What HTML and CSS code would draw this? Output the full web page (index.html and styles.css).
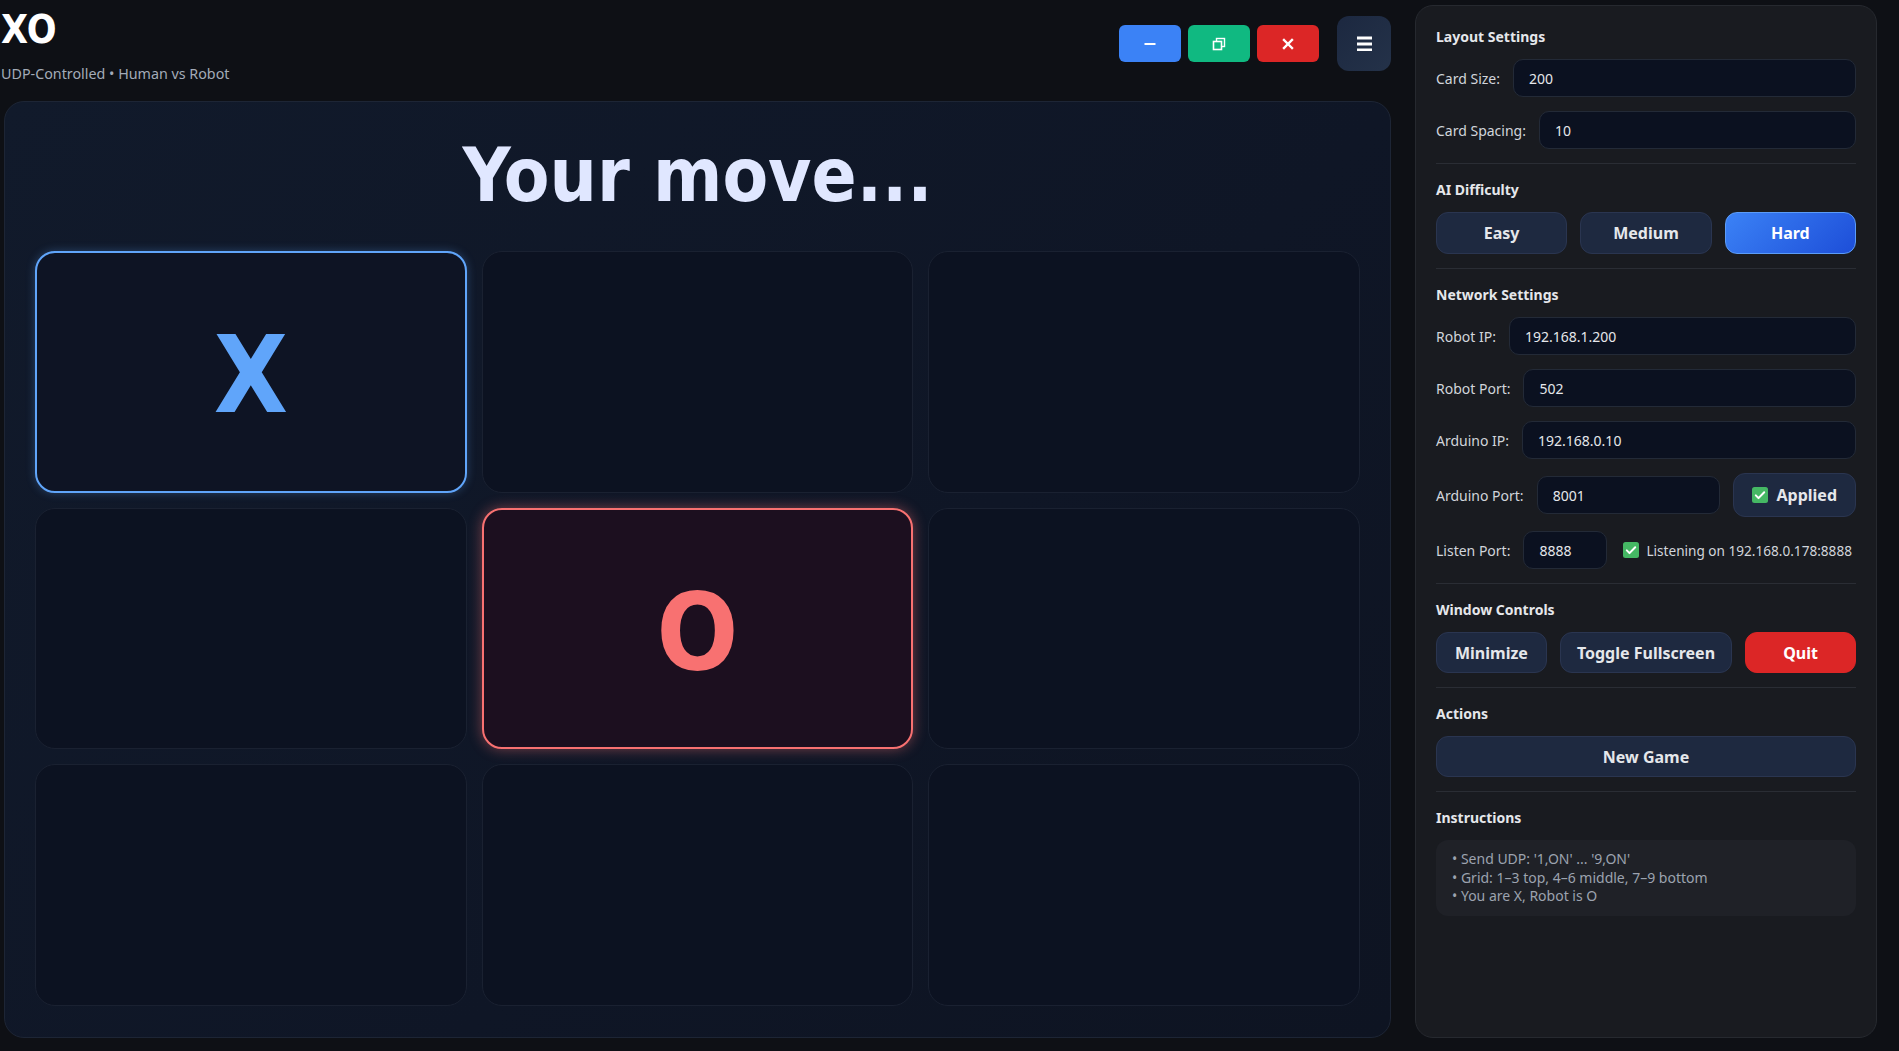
FILE: index.html
```html
<!DOCTYPE html>
<html lang="en">
<head>
<meta charset="utf-8">
<title>XO</title>
<link rel="stylesheet" href="styles.css">
</head>
<body>
<div class="app">
  <main class="main">
    <header class="header">
      <div class="brand">
        <h1 class="title">XO</h1>
        <p class="subtitle">UDP-Controlled • Human vs Robot</p>
      </div>
      <div class="controls">
        <div class="win-btns">
          <button class="wbtn wbtn-min" aria-label="Minimize">
            <svg width="12" height="12" viewBox="0 0 12 12"><rect x="0.5" y="5" width="11" height="2" fill="#fff"/></svg>
          </button>
          <button class="wbtn wbtn-max" aria-label="Toggle fullscreen">
            <svg width="14" height="14" viewBox="0 0 14 14"><rect x="4.5" y="1.5" width="8" height="8" fill="none" stroke="#fff" stroke-width="1.4"/><rect x="1.5" y="4.5" width="8" height="8" fill="#10b981" stroke="#fff" stroke-width="1.6"/></svg>
          </button>
          <button class="wbtn wbtn-close" aria-label="Close">
            <svg width="12" height="12" viewBox="0 0 12 12"><path d="M2 2L10 10M10 2L2 10" stroke="#fff" stroke-width="2.4" stroke-linecap="square"/></svg>
          </button>
        </div>
        <button class="menu-btn" aria-label="Menu">
          <svg width="15" height="15" viewBox="0 0 15 15"><rect x="0" y="0.5" width="15" height="3" fill="#fff"/><rect x="0" y="6.5" width="15" height="3" fill="#fff"/><rect x="0" y="12.5" width="15" height="3" fill="#fff"/></svg>
        </button>
      </div>
    </header>

    <section class="board-panel">
      <h2 class="status">Your move...</h2>
      <div class="grid">
        <div class="cell cell-x"><span class="mark">X</span></div>
        <div class="cell"></div>
        <div class="cell"></div>
        <div class="cell"></div>
        <div class="cell cell-o"><span class="mark">O</span></div>
        <div class="cell"></div>
        <div class="cell"></div>
        <div class="cell"></div>
        <div class="cell"></div>
      </div>
    </section>
  </main>

  <aside class="sidebar">
    <h3 class="sec-title">Layout Settings</h3>
    <div class="row"><label class="lbl">Card Size:</label><input class="inp" type="text" value="200"></div>
    <div class="row"><label class="lbl">Card Spacing:</label><input class="inp" type="text" value="10"></div>

    <div class="divider"></div>

    <h3 class="sec-title">AI Difficulty</h3>
    <div class="seg">
      <button class="btn">Easy</button>
      <button class="btn">Medium</button>
      <button class="btn btn-active">Hard</button>
    </div>

    <div class="divider"></div>

    <h3 class="sec-title">Network Settings</h3>
    <div class="row"><label class="lbl">Robot IP:</label><input class="inp" type="text" value="192.168.1.200"></div>
    <div class="row"><label class="lbl">Robot Port:</label><input class="inp" type="text" value="502"></div>
    <div class="row"><label class="lbl">Arduino IP:</label><input class="inp" type="text" value="192.168.0.10"></div>
    <div class="row"><label class="lbl">Arduino Port:</label><input class="inp" type="text" value="8001">
      <button class="btn btn-applied">
        <svg class="chk" width="16" height="16" viewBox="0 0 16 16"><rect width="16" height="16" rx="2.5" fill="#45b864"/><path d="M3.8 8.4l2.7 2.7 5.7-5.9" fill="none" stroke="#fff" stroke-width="2" stroke-linecap="round" stroke-linejoin="round"/></svg>
        <span>Applied</span>
      </button>
    </div>
    <div class="row"><label class="lbl">Listen Port:</label><input class="inp inp-short" type="text" value="8888">
      <span class="listen">
        <svg class="chk" width="16" height="16" viewBox="0 0 16 16"><rect width="16" height="16" rx="2.5" fill="#45b864"/><path d="M3.8 8.4l2.7 2.7 5.7-5.9" fill="none" stroke="#fff" stroke-width="2" stroke-linecap="round" stroke-linejoin="round"/></svg>
        <span>Listening on 192.168.0.178:8888</span>
      </span>
    </div>

    <div class="divider"></div>

    <h3 class="sec-title">Window Controls</h3>
    <div class="wc-row">
      <button class="btn btn-wc btn-minimize">Minimize</button>
      <button class="btn btn-wc btn-toggle">Toggle Fullscreen</button>
      <button class="btn btn-wc btn-quit">Quit</button>
    </div>

    <div class="divider"></div>

    <h3 class="sec-title">Actions</h3>
    <button class="btn btn-wide">New Game</button>

    <div class="divider"></div>

    <h3 class="sec-title">Instructions</h3>
    <div class="instructions">
      <div>• Send UDP: '1,ON' ... '9,ON'</div>
      <div>• Grid: 1–3 top, 4–6 middle, 7–9 bottom</div>
      <div>• You are X, Robot is O</div>
    </div>
  </aside>
</div>
</body>
</html>
```

FILE: styles.css
```css
html, body {
  margin: 0;
  height: 100%;
  background: #0e1015;
}

body {
  font-family: "Noto Sans", sans-serif;
  color: #e5e7eb;
  overflow: hidden;
}

.app {
  display: flex;
  gap: 24px;
  height: 100vh;
  box-sizing: border-box;
  padding: 5px 22px 13px 1px;
}

/* ---------- left column ---------- */
.main {
  flex: 1;
  min-width: 0;
  display: flex;
  flex-direction: column;
}

.header {
  display: flex;
  justify-content: space-between;
  align-items: flex-start;
  padding-top: 6px;
  margin-bottom: 17px;
}

.title {
  margin: 0;
  font-family: "DejaVu Sans Condensed", "DejaVu Sans", sans-serif;
  font-stretch: condensed;
  font-weight: 700;
  font-size: 39px;
  line-height: 37px;
  color: #ffffff;
}

.subtitle {
  margin: 16px 0 0 0;
  font-size: 14.3px;
  line-height: 20px;
  color: #a3abb8;
}

.controls {
  display: flex;
  align-items: center;
  gap: 18px;
  margin-top: 5px;
}

.win-btns {
  display: flex;
  gap: 7px;
}

.wbtn {
  width: 62px;
  height: 37px;
  border: none;
  border-radius: 6px;
  display: flex;
  align-items: center;
  justify-content: center;
  padding: 0;
}

.wbtn-min { background: #3b82f6; }
.wbtn-max { background: #10b981; }
.wbtn-close { background: #dc2626; }

.menu-btn {
  width: 54px;
  height: 55px;
  border: none;
  border-radius: 12px;
  background: linear-gradient(135deg, #1c2840, #243249);
  display: flex;
  align-items: center;
  justify-content: center;
  padding: 0;
}

.board-panel {
  flex: 1;
  min-height: 0;
  margin-left: 3px;
  display: flex;
  flex-direction: column;
  border: 1px solid #1d2535;
  border-radius: 20px;
  background: linear-gradient(135deg, #111a2b 0%, #0f1626 60%, #0e1422 100%);
  padding: 29px 30px 31px 30px;
}

.status {
  margin: 0 0 31px 0;
  text-align: center;
  font-family: "DejaVu Sans Condensed", "DejaVu Sans", sans-serif;
  font-stretch: condensed;
  font-weight: 700;
  font-size: 74px;
  line-height: 89px;
  color: #e0e7ff;
}

.grid {
  flex: 1;
  min-height: 0;
  display: grid;
  grid-template-columns: repeat(3, 1fr);
  grid-template-rows: repeat(3, 1fr);
  gap: 15px;
}

.cell {
  border: 1px solid #1a2131;
  border-radius: 20px;
  background: #0c1221;
  display: flex;
  align-items: center;
  justify-content: center;
}

.cell-x {
  border: 2px solid #60a5fa;
  background: #0e1424;
  box-shadow: 0 0 10px rgba(96, 165, 250, 0.3);
}

.cell-o {
  border: 2px solid #f87171;
  background: #1c0f1f;
  box-shadow: 0 0 14px rgba(248, 113, 113, 0.45);
}

.mark {
  font-family: "DejaVu Sans Condensed", "DejaVu Sans", sans-serif;
  font-stretch: condensed;
  font-weight: 700;
  font-size: 107px;
  line-height: 1;
  margin-top: 8px;
}

.cell-x .mark { color: #60a5fa; }
.cell-o .mark { color: #f87171; }

/* ---------- sidebar ---------- */
.sidebar {
  width: 462px;
  flex: none;
  box-sizing: border-box;
  background: #191b20;
  border: 1px solid #26292f;
  border-radius: 18px;
  padding: 21px 20px 20px 20px;
  display: flex;
  flex-direction: column;
}

.sec-title {
  margin: 0 0 12px 0;
  font-size: 14px;
  font-weight: 700;
  line-height: 20px;
  color: #e5e7eb;
}

.row {
  display: flex;
  align-items: center;
  gap: 13px;
}

.row + .row {
  margin-top: 14px;
}

.lbl {
  font-size: 14px;
  color: #d1d5db;
  white-space: nowrap;
}

.inp {
  flex: 1;
  min-width: 0;
  height: 38px;
  box-sizing: border-box;
  background: #0b1120;
  border: 1px solid #232a37;
  border-radius: 10px;
  color: #e5e7eb;
  font-family: "Noto Sans", sans-serif;
  font-size: 14px;
  padding: 0 15px;
  outline: none;
}

.inp-short {
  flex: none;
  width: 84px;
}

.listen {
  display: flex;
  align-items: center;
  gap: 7px;
  margin-left: 3px;
  font-size: 13.6px;
  color: #d1d5db;
  white-space: nowrap;
}

.chk {
  flex: none;
  display: block;
}

.divider {
  height: 1px;
  background: #2a2d34;
  margin: 14px 0 16px 0;
  flex: none;
}

.btn {
  height: 42px;
  box-sizing: border-box;
  border-radius: 12px;
  background: #1e2940;
  border: 1px solid #2a3550;
  color: #e5e7eb;
  font-family: "Noto Sans", sans-serif;
  font-weight: 700;
  font-size: 16px;
  padding: 0;
}

.seg {
  display: grid;
  grid-template-columns: repeat(3, 1fr);
  gap: 13px;
}

.btn-active {
  background: linear-gradient(135deg, #3b82f6, #1d4ed8);
  border-color: #5b9cf8;
  color: #ffffff;
}

.btn-applied {
  height: 44px;
  padding: 0 18px;
  display: flex;
  align-items: center;
  gap: 8px;
  flex: none;
}

.wc-row {
  display: flex;
  gap: 13px;
}

.btn-wc {
  height: 41px;
}

.btn-minimize { padding: 0 18px; }
.btn-toggle { padding: 0 16px; }

.btn-quit {
  flex: 1;
  background: #dc2626;
  border-color: #dc2626;
  color: #ffffff;
}

.btn-wide {
  width: 100%;
  height: 41px;
}

.instructions {
  background: #1f2127;
  border-radius: 12px;
  padding: 10px 16px;
  font-size: 14px;
  line-height: 18.5px;
  color: #9ca3af;
}
```
